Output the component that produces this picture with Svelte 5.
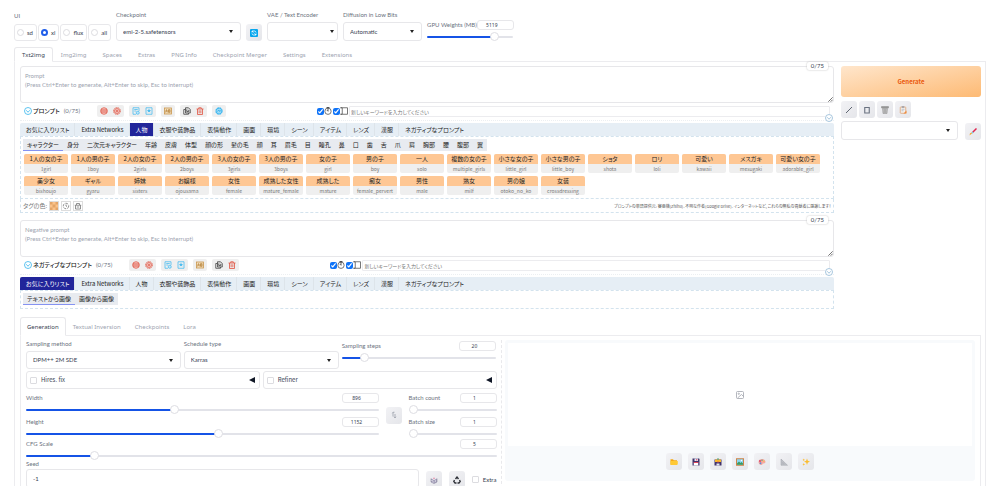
<script>
	let ui = $state('xl');
	let gpu = $state(5119);
	let steps = $state(20);
	let width = $state(896);
	let height = $state(1152);
	let batchCount = $state(1);
	let batchSize = $state(1);
	let cfg = $state(5);
	let seed = $state('-1');

	const uiModes = ['sd', 'xl', 'flux', 'all'];
	const mainTabs = ['Txt2img', 'Img2img', 'Spaces', 'Extras', 'PNG Info', 'Checkpoint Merger', 'Settings', 'Extensions'];
	const genTabs = ['Generation', 'Textual Inversion', 'Checkpoints', 'Lora'];
	const categories = [
		'お気に入りリスト', 'Extra Networks', '人物', '衣服や装飾品', '表情動作', '画面',
		'環境', 'シーン', 'アイテム', 'レンズ', '漢服', 'ネガティブなプロンプト'
	];
	const personGroups = [
		'キャラクター', '身分', '二次元キャラクター', '年齢', '皮膚', '体型', '顔の形', '髪の毛',
		'顔', '耳', '眉毛', '目', '瞳孔', '鼻', '口', '歯', '舌', '爪', '肩', '胸部', '腰', '腹部', '翼'
	];
	const favoriteGroups = ['テキストから画像', '画像から画像'];
	const tags = [
		['1人の女の子', '1girl'],
		['1人の男の子', '1boy'],
		['2人の女の子', '2girls'],
		['2人の男の子', '2boys'],
		['3人の女の子', '3girls'],
		['3人の男の子', '3boys'],
		['女の子', 'girl'],
		['男の子', 'boy'],
		['一人', 'solo'],
		['複数の女の子', 'multiple_girls'],
		['小さな女の子', 'little_girl'],
		['小さな男の子', 'little_boy'],
		['ショタ', 'shota'],
		['ロリ', 'loli'],
		['可愛い', 'kawaii'],
		['メスガキ', 'mesugaki'],
		['可愛い女の子', 'adorable_girl'],
		['美少女', 'bishoujo'],
		['ギャル', 'gyaru'],
		['姉妹', 'sisters'],
		['お嬢様', 'ojousama'],
		['女性', 'female'],
		['成熟した女性', 'mature_female'],
		['成熟した', 'mature'],
		['痴女', 'female_pervert'],
		['男性', 'male'],
		['熟女', 'milf'],
		['男の娘', 'otoko_no_ko'],
		['女装', 'crossdressing']
	];
	const outputTools = ['folder', 'save', 'zip', 'picture', 'palette', 'ruler', 'sparkles'];
	const toolGroups = [
		['globe', 'gear'],
		['history', 'star'],
		['ab'],
		['copy', 'trash']
	];

	const fill = (value, min, max) => `${((value - min) / (max - min)) * 100}%`;
</script>

{#snippet icon(name)}
	<svg class="icon" viewBox="0 0 16 16" fill="none" stroke="currentColor" stroke-width="1.6" aria-hidden="true">
		{#if name === 'refresh'}
			<rect x="0" y="0" width="16" height="16" rx="2" fill="#08a7ee" stroke="none" />
			<path d="M4 7V4h5a3.5 3.5 0 0 1 3 3M12 9v3H7a3.5 3.5 0 0 1-3-3M4 4l3 3M12 12 9 9" stroke="#fff" />
		{:else if name === 'chevron'}
			<circle cx="8" cy="8" r="7" />
			<path d="m4.5 6.5 3.5 4 3.5-4" />
		{:else if name === 'globe'}
			<circle cx="8" cy="8" r="6.6" fill="#f7c4bd" stroke="#e0604f" />
			<path d="M1.5 6h13M1.5 10h13" stroke="#d9503f" />
		{:else if name === 'gear'}
			<circle cx="8" cy="8" r="6.8" stroke="#e0604f" stroke-width="1.8" stroke-dasharray="3 1.2" />
			<circle cx="8" cy="8" r="5" fill="#f9d3ce" stroke="#e0604f" />
			<circle cx="8" cy="8" r="1.8" stroke="#d9503f" />
		{:else if name === 'history'}
			<path d="M14 8V1.5H2v13h6M4.5 5h7M4.5 8h4" stroke="#4bbcf0" />
			<circle cx="11.5" cy="11.5" r="3" fill="#bfe7fb" stroke="#4bbcf0" />
		{:else if name === 'star'}
			<path d="M2 1.5h12v13H2z" stroke="#4bbcf0" />
			<path d="m8 3 1.3 3 3 .2-2.3 2 .7 3L8 9.6 5.3 11.2l.7-3-2.3-2 3-.2z" fill="#4bbcf0" stroke="none" />
		{:else if name === 'ab'}
			<rect x="1" y="2" width="14" height="12" fill="#f3dfbf" stroke="#c9964e" />
			<path d="m3 11 2-6 1.5 6M9 5h3l1 1.5L9 8l4 1.5L12 11H9zM3 8h10" stroke="#b58238" stroke-width="1.2" />
		{:else if name === 'copy'}
			<path d="M5 1.5h6L14.5 5v7H5z" fill="#ddd" stroke="#444" />
			<path d="M5 5H1.5v9.5H11V12M7.5 5v4h4V6" stroke="#444" />
		{:else if name === 'trash'}
			<path d="M1 4h14M5.5 4V1.5h5V4M3 4v11h10V4M6.3 6.5v6M9.7 6.5v6" stroke="#e0523f" />
		{:else if name === 'ai'}
			<circle cx="8" cy="8" r="6" fill="#9adaf6" stroke="#42b8ef" stroke-width="2.6" stroke-dasharray="4 .7" />
			<path d="M5 9 7.5 6l2 3L11 6.5" stroke="#2ca9e8" />
		{:else if name === 'clock'}
			<circle cx="8" cy="8.5" r="6.3" stroke="#555" />
			<path d="M8 1v7.5M5 1h6M8 8.5l-2-2" stroke="#333" />
		{:else if name === 'panel'}
			<path d="M1 1.5h14v13H1M4.5 1.5v13M1 1.5h3M1 14.5h3" stroke="#555" />
		{:else if name === 'swatch'}
			<rect x="0" y="0" width="16" height="16" fill="#fbc28a" stroke="none" />
			<path d="M0 0h5v5H0zM11 0h5v5h-5zM5 5h6v6H5zM0 11h5v5H0zM11 11h5v5h-5z" fill="#e3a568" stroke="none" />
		{:else if name === 'reset'}
			<circle cx="8" cy="8" r="5.5" stroke="#777" stroke-dasharray="6 2" />
			<path d="M8 5v3l2 1" stroke="#777" />
		{:else if name === 'basket'}
			<path d="M1.5 6.5h13M3 6.5V14h10V6.5M5 6V3h6v3M5.5 10h5" stroke="#777" />
		{:else if name === 'resize'}
			<path d="M1 15 15 1M8.5 15 15 8.5" stroke="#444" stroke-width="2.4" />
		{:else if name === 'slash'}
			<path d="M2 14 14 2" stroke="#5d6470" stroke-width="2" />
		{:else if name === 'square'}
			<path d="M3.5 3h9v11h-9z" stroke="#6a7280" stroke-width="2.2" />
		{:else if name === 'bin'}
			<path d="M1 1h14v3H1z" fill="#999" stroke="#888" stroke-width="1" />
			<path d="M3 5h10l-1 10H4z" fill="#c2c2c2" stroke="#8b8b8b" stroke-width="1" />
			<path d="M6.5 6v8M9.5 6v8" stroke="#8b8b8b" stroke-width="1" />
		{:else if name === 'clipboard'}
			<rect x="2.5" y="2" width="11" height="12.5" rx="1" fill="#f4f1ee" stroke="#dda273" stroke-width="1.6" />
			<path d="M5.5 2h5" stroke="#8b94a3" stroke-width="2.6" />
			<path d="M5 6.5h6M5 9.5h4" stroke="#9ba6b5" stroke-width="1.2" />
			<path d="M9 15l6-6v6z" fill="#ef8b3c" stroke="none" />
		{:else if name === 'brush'}
			<path d="m15 1-8 8" stroke="#e0244f" stroke-width="3" />
			<path d="m8 8-2.5 2.5" stroke="#73d0e5" stroke-width="3" />
			<path d="M6.5 10.5 1 15l1-4.5L5 9z" fill="#f2a73b" stroke="none" />
		{:else if name === 'swap'}
			<path d="M6 11V3M4.5 4.5 6 2.5h3M10 6v7M8 11.5l2 2.5 2-2.5" stroke="#9197a2" stroke-width="1.4" />
		{:else if name === 'dice'}
			<path d="m2 5 6 3 6-3v7l-6 3-6-3z" fill="#aaa5bf" stroke="#77718f" stroke-width="1" />
			<path d="m2 5 6-3 6 3-6 3z" fill="#eceaf2" stroke="none" />
			<path d="M8 3.5v2" stroke="#dd3b61" stroke-width="2" />
			<path d="M4 8v2M6 11v2M11 9v2" stroke="#fff" />
		{:else if name === 'recycle'}
			<path d="m5 6 3-4 3 4M3 8l-1.5 3L4 14h3M13 8l1.5 3-2.5 3H9" stroke="#2c2f36" stroke-width="2.6" />
		{:else if name === 'image'}
			<rect x="1" y="1" width="14" height="14" rx="2" stroke="#a1a5ad" />
			<circle cx="5.5" cy="5.5" r="1.3" stroke="#a1a5ad" />
			<path d="m3 14 8-7 4 4" stroke="#a1a5ad" />
		{:else if name === 'folder'}
			<path d="M1 2.5h5L7.5 4.5H14V13H1z" fill="#f5a914" stroke="none" />
			<path d="M1 6h14.5v6.5L14 14H1z" fill="#ffc935" stroke="none" />
		{:else if name === 'save'}
			<path d="M1 1h13l1 1v13H1z" fill="#40336b" stroke="none" />
			<path d="M5 1h7v5H5z" fill="#dfe4f2" stroke="none" />
			<path d="M3.5 9h9v6h-9z" fill="#fff" stroke="none" />
			<path d="M3.5 9h9M9.5 2v3" stroke="#e4465a" stroke-width="2" />
		{:else if name === 'zip'}
			<path d="M1 3h14v12H1z" fill="#40336b" stroke="none" />
			<path d="M2 3h12v5H2z" fill="#f8b72b" stroke="none" />
			<path d="M5 11h6v4H5z" fill="#e3e6f1" stroke="none" />
			<path d="M6 2h4" stroke="#4ca676" stroke-width="2" />
			<path d="M6 8h4" stroke="#e55353" />
		{:else if name === 'picture'}
			<rect x="1" y="1.5" width="14" height="13" fill="#8bd6f4" stroke="#cf8446" stroke-width="2" />
			<path d="m2 11 4-4 3 3 2-2 3 3v2.5H2z" fill="#3a9b62" stroke="none" />
			<circle cx="11" cy="5" r="1.5" fill="#fff" stroke="none" />
		{:else if name === 'palette'}
			<path d="M8 2c5 0 7 3 7 6s-3 3-5 3 0 3-3 3-6-2-6-6 3-6 7-6z" fill="#f5a6a0" stroke="none" />
			<circle cx="4" cy="6" r="1.8" fill="#db3e63" stroke="none" />
			<circle cx="8" cy="4.5" r="1.5" fill="#5caf7c" stroke="none" />
			<circle cx="5" cy="10.5" r="1.8" fill="#5e8ad0" stroke="none" />
			<circle cx="11.5" cy="6.5" r="1.6" fill="#f3c651" stroke="none" />
		{:else if name === 'ruler'}
			<path d="M2 2v12.5h13zM5 9v2.5h3.5z" fill="#bfc1c7" fill-rule="evenodd" stroke="#9ea1a8" stroke-width="1" />
		{:else if name === 'sparkles'}
			<path d="m10 1 1.6 4.4L16 7.5l-4.4 1.6L10 14l-1.6-4.9L4 7.5l4.4-2.1zM3.5 1l.8 2 2 .8-2 .8-.8 2-.8-2-2-.8 2-.8zM3.5 10l.8 2 2 .8-2 .8-.8 2-.8-2-2-.8 2-.8z" fill="#fbbc2c" stroke="none" />
		{/if}
	</svg>
{/snippet}

{#snippet promptBlock(id, title, placeholder, active, negative)}
	<section class="prompt">
		<div class="prompt-box">
			<textarea {id} aria-label={title} {placeholder}></textarea>
			<span class="counter">0/75</span>
			<span class="grip">{@render icon('resize')}</span>
		</div>
		<div class="toolbar">
			<button class="fold" aria-label="toggle {id}">{@render icon('chevron')}</button>
			<h2>{title}</h2>
			<span class="count">(0/75)</span>
			<div class="tool-groups">
				{#each toolGroups as group}
					<div class="tool-group">
						{#each group as name}
							<button aria-label={name}>{@render icon(name)}</button>
						{/each}
					</div>
				{/each}
				{#if !negative}
					<div class="tool-group">
						<button aria-label="ai">{@render icon('ai')}</button>
					</div>
				{/if}
			</div>
			<label class="toggle"><input type="checkbox" checked aria-label="auto translate" />{@render icon('clock')}</label>
			<label class="toggle"><input type="checkbox" checked aria-label="side panel" />{@render icon('panel')}</label>
			<input class="keyword" type="text" aria-label="keyword" placeholder="新しいキーワードを入力してください" />
			<button class="expand" aria-label="expand {id}">{@render icon('chevron')}</button>
		</div>
		<div class="categories">
			{#each categories as name}
				<button class:active={name === active}>{name}</button>
			{/each}
		</div>
		<div class="groups">
			<div class="group-tabs">
				{#each negative ? favoriteGroups : personGroups as name, i}
					<button class:active={i === 0}>{name}</button>
				{/each}
			</div>
			{#if !negative}
				<div class="tags">
					{#each tags as [label, key]}
						<button class="tag"><span>{label}</span><small>{key}</small></button>
					{/each}
				</div>
			{/if}
		</div>
		{#if !negative}
			<div class="tag-footer">
				<span>タグの色:</span>
				<button aria-label="tag color">{@render icon('swatch')}</button>
				<button aria-label="reset color">{@render icon('reset')}</button>
				<button aria-label="clear color">{@render icon('basket')}</button>
				<p>プロンプトの単語提供元: 賽亜機(Zhihu)、不明な作者(Google Drive)、インターネットなど, これらの無私の貢献者に感謝します！</p>
			</div>
		{/if}
	</section>
{/snippet}

<main>
	<header>
		<fieldset class="field">
			<legend>UI</legend>
			<div class="modes">
				{#each uiModes as mode}
					<label><input type="radio" name="ui" value={mode} bind:group={ui} />{mode}</label>
				{/each}
			</div>
		</fieldset>
		<div class="field checkpoint">
			<label for="checkpoint">Checkpoint</label>
			<select id="checkpoint"><option>emi-2-5.safetensors</option></select>
		</div>
		<button class="square" aria-label="refresh">{@render icon('refresh')}</button>
		<div class="field vae">
			<label for="vae">VAE / Text Encoder</label>
			<select id="vae" class="tight"><option></option></select>
		</div>
		<div class="field low-bits">
			<label for="bits">Diffusion in Low Bits</label>
			<select id="bits"><option>Automatic</option></select>
		</div>
		<div class="slider gpu">
			<div class="slider-head">
				<label for="gpu">GPU Weights (MB)</label>
				<input type="text" class="number" aria-label="GPU weights value" bind:value={gpu} />
			</div>
			<input id="gpu" type="range" min="0" max="6243" bind:value={gpu} style:--fill={fill(gpu, 0, 6243)} />
		</div>
	</header>

	<nav class="tabs">
		{#each mainTabs as tab, i}
			<button class:active={i === 0}>{tab}</button>
		{/each}
	</nav>

	<div class="panel">
		<div class="top">
			<div class="prompts">
				{@render promptBlock('prompt', 'プロンプト', 'Prompt\n(Press Ctrl+Enter to generate, Alt+Enter to skip, Esc to interrupt)', '人物', false)}
				{@render promptBlock('negative', 'ネガティブなプロンプト', 'Negative prompt\n(Press Ctrl+Enter to generate, Alt+Enter to skip, Esc to interrupt)', 'お気に入りリスト', true)}
			</div>
			<aside>
				<button class="generate">Generate</button>
				<div class="actions">
					{#each ['slash', 'square', 'bin', 'clipboard'] as name}
						<button class="square" aria-label={name}>{@render icon(name)}</button>
					{/each}
				</div>
				<div class="styles">
					<select aria-label="styles"><option></option></select>
					<button class="square" aria-label="edit styles">{@render icon('brush')}</button>
				</div>
			</aside>
		</div>

		<nav class="tabs gen-tabs">
			{#each genTabs as tab, i}
				<button class:active={i === 0}>{tab}</button>
			{/each}
		</nav>
		<div class="generation">
			<div class="settings">
				<div class="sampling">
					<div class="field">
						<label for="sampler">Sampling method</label>
						<select id="sampler"><option>DPM++ 2M SDE</option></select>
					</div>
					<div class="field">
						<label for="schedule">Schedule type</label>
						<select id="schedule"><option>Karras</option></select>
					</div>
					<div class="slider">
						<div class="slider-head">
							<label for="steps">Sampling steps</label>
							<input type="text" class="number" aria-label="Sampling steps value" bind:value={steps} />
						</div>
						<input id="steps" type="range" min="1" max="150" bind:value={steps} style:--fill={fill(steps, 1, 150)} />
					</div>
				</div>
				<div class="accordions">
					{#each ['Hires. fix', 'Refiner'] as name}
						<div class="accordion">
							<label><input type="checkbox" class="check" />{name}</label>
							<button aria-label="open {name}"><svg viewBox="0 0 6 6"><path d="M6 0v6L0 3z" fill="#111827" /></svg></button>
						</div>
					{/each}
				</div>
				<div class="dimensions">
					<div class="stack">
						<div class="slider">
							<div class="slider-head">
								<label for="width">Width</label>
								<input type="text" class="number" aria-label="Width value" bind:value={width} />
							</div>
							<input id="width" type="range" min="64" max="2048" step="8" bind:value={width} style:--fill={fill(width, 64, 2048)} />
						</div>
						<div class="slider">
							<div class="slider-head">
								<label for="height">Height</label>
								<input type="text" class="number" aria-label="Height value" bind:value={height} />
							</div>
							<input id="height" type="range" min="64" max="2048" step="8" bind:value={height} style:--fill={fill(height, 64, 2048)} />
						</div>
					</div>
					<button class="square" aria-label="swap">{@render icon('swap')}</button>
					<div class="stack batch">
						<div class="slider">
							<div class="slider-head">
								<label for="count">Batch count</label>
								<input type="text" class="number" aria-label="Batch count value" bind:value={batchCount} />
							</div>
							<input id="count" type="range" min="1" max="100" bind:value={batchCount} style:--fill={fill(batchCount, 1, 100)} />
						</div>
						<div class="slider">
							<div class="slider-head">
								<label for="size">Batch size</label>
								<input type="text" class="number" aria-label="Batch size value" bind:value={batchSize} />
							</div>
							<input id="size" type="range" min="1" max="8" bind:value={batchSize} style:--fill={fill(batchSize, 1, 8)} />
						</div>
					</div>
				</div>
				<div class="slider">
					<div class="slider-head">
						<label for="cfg">CFG Scale</label>
						<input type="text" class="number" aria-label="CFG value" bind:value={cfg} />
					</div>
					<input id="cfg" type="range" min="1" max="30" step="0.5" bind:value={cfg} style:--fill={fill(cfg, 1, 30)} />
				</div>
				<div class="seed">
					<div class="field">
						<label for="seed">Seed</label>
						<input id="seed" type="text" bind:value={seed} />
					</div>
					<button class="square" aria-label="random seed">{@render icon('dice')}</button>
					<button class="square" aria-label="reuse seed">{@render icon('recycle')}</button>
					<label class="extra"><input type="checkbox" class="check" />Extra</label>
				</div>
			</div>
			<div class="output">
				<div class="gallery">
					<div class="canvas">{@render icon('image')}</div>
					<div class="output-tools">
						{#each outputTools as name}
							<button class="square" aria-label={name}>{@render icon(name)}</button>
						{/each}
					</div>
				</div>
			</div>
		</div>
	</div>
</main>

<style>
	:global(body) {
		margin: 0;
		background: #fff;
		overflow: hidden;
	}

	main {
		padding: 11px 14px 0;
		font-family: 'Noto Sans CJK JP', sans-serif;
		font-size: 6px;
		line-height: 8px;
		font-feature-settings: 'palt';
		color: #374151;
	}

	main * {
		box-sizing: border-box;
	}

	button,
	input,
	select,
	textarea {
		margin: 0;
		padding: 0;
		border: 0;
		background: none;
		font: inherit;
		font-feature-settings: inherit;
		color: inherit;
	}

	button {
		cursor: pointer;
	}

	.field,
	.slider,
	.prompt-box,
	.count,
	.extra {
		font-family: Lato, 'Noto Sans CJK JP', sans-serif;
	}

	.tabs,
	.number {
		font-family: 'Noto Sans', sans-serif;
	}

	.icon {
		display: block;
		width: 8px;
		height: 8px;
	}

	header {
		display: flex;
		align-items: flex-end;
		gap: 5px;
		height: 30px;
	}

	.field {
		display: flex;
		flex-direction: column;
		gap: 3px;
		min-width: 0;
		margin: 0;
		padding: 0;
		border: 0;
	}

	.field > label,
	legend,
	.slider label {
		padding: 0;
		color: #6b7280;
		white-space: nowrap;
	}

	.modes {
		display: flex;
		gap: 1px;
		margin-top: 4px;
	}

	.modes label {
		display: flex;
		align-items: center;
		gap: 3px;
		height: 17px;
		padding: 0 3px 0 2px;
		border: 1px solid #e8e8eb;
		border-radius: 3px;
	}

	.modes input {
		appearance: none;
		width: 7px;
		height: 7px;
		border: 1px solid #dcdce0;
		border-radius: 50%;
	}

	.modes input:checked {
		border: 2px solid #1f5eea;
	}

	select,
	.seed .field input {
		width: 100%;
		height: 19px;
		padding: 0 6px;
		border: 1px solid #e7e7ea;
		border-radius: 3px;
	}

	select {
		appearance: none;
		background: url("data:image/svg+xml,%3Csvg xmlns='http://www.w3.org/2000/svg' viewBox='0 0 4 3'%3E%3Cpath d='M0 0h4L2 3z' fill='%23222'/%3E%3C/svg%3E") right 7px center / 4px 3px no-repeat;
	}

	select.tight {
		background-position: right 3px center;
	}

	.checkpoint {
		width: 125px;
	}

	.vae {
		width: 71px;
	}

	.low-bits {
		width: 79px;
	}

	.gpu {
		width: 86px;
	}

	.square {
		display: flex;
		flex: none;
		align-items: center;
		justify-content: center;
		width: 16px;
		height: 17px;
		border-radius: 3px;
		background: linear-gradient(135deg, #f2f2f5, #e5e6ea);
	}

	.slider-head {
		display: flex;
		justify-content: space-between;
		align-items: center;
		height: 11px;
	}

	.number {
		width: 37px;
		height: 10px;
		padding-right: 7px;
		border: 1px solid #e7e7ea;
		border-radius: 3px;
		font-size: 5px;
		text-align: center;
	}

	input[type='range'] {
		appearance: none;
		display: block;
		width: 100%;
		height: 8px;
		margin-top: 3px;
	}

	input[type='range']::-webkit-slider-runnable-track {
		height: 2px;
		border-radius: 1px;
		background: linear-gradient(to right, #1553e6 var(--fill), #e2e3e9 var(--fill));
	}

	input[type='range']::-webkit-slider-thumb {
		appearance: none;
		width: 9px;
		height: 9px;
		margin-top: -4px;
		border: 1px solid #dedee3;
		border-radius: 50%;
		background: #fff;
	}

	.tabs {
		display: flex;
		margin-top: 6px;
	}

	.tabs button {
		height: 15px;
		padding: 0 7px;
		margin-bottom: -1px;
		border: 1px solid transparent;
		border-radius: 3px 3px 0 0;
		color: #9ca3af;
	}

	.tabs button.active {
		border-color: #e8e8eb;
		border-bottom-color: #fff;
		background: #fff;
		color: #374151;
	}

	.panel {
		padding: 4px 4px 0 5px;
		border: 1px solid #ececef;
		border-bottom: 0;
	}

	.top {
		display: flex;
		gap: 7px;
	}

	.prompts {
		flex: 1;
		min-width: 0;
	}

	.prompt + .prompt {
		margin-top: 7px;
	}

	.prompt-box,
	.toolbar {
		position: relative;
	}

	textarea {
		display: block;
		width: 100%;
		height: 37px;
		padding: 4px;
		border: 1px solid #e7e7ea;
		border-radius: 3px;
		resize: none;
		line-height: 9px;
	}

	textarea::placeholder {
		color: #9ca3af;
	}

	.counter {
		position: absolute;
		top: -4px;
		right: 6px;
		padding: 0 4px;
		border-radius: 2px;
		background: #fff;
		box-shadow: 0 0 2px #bbb;
	}

	.grip {
		position: absolute;
		right: 1px;
		bottom: 1px;
	}

	.grip .icon {
		width: 5px;
		height: 5px;
	}

	.toolbar {
		display: flex;
		align-items: center;
		height: 18px;
		padding: 0 4px 1px;
		border-bottom: 1px dotted #eceff2;
	}

	.fold {
		margin-right: 1px;
		color: #36b5ee;
	}

	h2 {
		margin: 0 4px 0 0;
		font-size: 6px;
		font-weight: 500;
		color: #222;
	}

	.count {
		color: #6b7280;
	}

	.tool-groups {
		display: flex;
		gap: 5px;
		margin: 0 91px 0 17px;
	}

	.tool-group {
		display: flex;
		align-items: center;
		gap: 5px;
		height: 12px;
		padding: 0 3px;
		border-radius: 2px;
		background: #efefef;
	}

	.toggle {
		display: flex;
		align-items: center;
		margin-right: 1px;
	}

	.toggle input {
		width: 7px;
		height: 7px;
		accent-color: #0f73f7;
	}

	.keyword {
		flex: 1;
		height: 11px;
		padding-left: 1px;
		border: 1px solid #ececef;
		border-radius: 1px;
		font-size: 5px;
	}

	.expand {
		position: absolute;
		right: 1px;
		bottom: -2px;
		border-radius: 50%;
		background: #fff;
		color: #92b9d6;
	}

	.categories {
		display: flex;
		height: 13px;
		margin-top: 2px;
		border-radius: 2px 2px 0 0;
		background: #e6eef5;
		overflow: hidden;
	}

	.categories button {
		padding: 0 5px 0 6px;
		border-right: 1px solid #dde4ea;
		color: #222;
	}

	.categories button:last-child {
		border-right: 0;
	}

	.categories button.active {
		background: #21259a;
		color: #fff;
	}

	.groups {
		padding: 2px 2px 3px;
		border: 1px dashed #d3e3ee;
	}

	.group-tabs {
		display: inline-flex;
		height: 12px;
		vertical-align: top;
		background: #e8ebf0;
	}

	.group-tabs button {
		padding: 0 4px;
		border-bottom: 1px solid transparent;
		color: #222;
	}

	.group-tabs button.active {
		border-bottom-color: #8593f2;
	}

	.tags {
		display: flex;
		flex-wrap: wrap;
		gap: 3px;
		padding: 3px 1px 0;
	}

	.tag {
		width: 44px;
		height: 19px;
		border-radius: 2px;
		background: #efefef;
		overflow: hidden;
	}

	.tag span,
	.tag small {
		display: block;
		height: 10px;
		line-height: 9px;
	}

	.tag span {
		background: #fec794;
		color: #222;
	}

	.tag small {
		font-size: 5px;
		color: #777;
	}

	.tag-footer {
		display: flex;
		align-items: center;
		gap: 2px;
		height: 14px;
		padding: 0 2px;
		border: 1px dashed #d3e3ee;
		border-top: 0;
		color: #777;
	}

	.tag-footer button {
		border: 1px solid #ddd;
	}

	.tag-footer p {
		margin: 0 0 0 auto;
		font-size: 4px;
		color: #555;
	}

	aside {
		width: 140px;
	}

	.generate {
		display: block;
		width: 100%;
		height: 31px;
		border-radius: 3px;
		background: linear-gradient(to bottom right, #ffe6cc, #fdba74);
		font-weight: 700;
		color: #ea580c;
	}

	.actions {
		display: flex;
		gap: 2px;
		margin-top: 4px;
	}

	.styles {
		display: flex;
		align-items: flex-end;
		gap: 7px;
		margin-top: 3px;
	}

	.gen-tabs {
		margin-top: 8px;
	}

	.gen-tabs button {
		height: 19px;
		padding: 0 6px;
	}

	.generation {
		display: grid;
		grid-template-columns: minmax(0, 1fr) minmax(0, 1fr);
		height: 160px;
		padding: 4px 5px 0;
		border: 1px solid #ececef;
	}

	.settings {
		padding-right: 4px;
	}

	.sampling {
		display: grid;
		grid-template-columns: repeat(3, 1fr);
		gap: 3px;
	}

	.sampling select {
		height: 18px;
	}

	.accordions {
		display: grid;
		grid-template-columns: 1fr 1fr;
		gap: 3px;
		margin-top: 2px;
	}

	.accordion {
		display: flex;
		align-items: center;
		justify-content: space-between;
		height: 18px;
		padding: 0 4px 0 3px;
		border: 1px solid #e7e7ea;
		border-radius: 3px;
	}

	.accordion label,
	.extra {
		display: flex;
		align-items: center;
		gap: 4px;
	}

	.accordion svg {
		display: block;
		width: 6px;
		height: 6px;
	}

	.check {
		appearance: none;
		width: 7px;
		height: 7px;
		border: 1px solid #dcdce0;
		border-radius: 1px;
	}

	.dimensions {
		display: flex;
		align-items: center;
		gap: 7px;
		margin-top: 3px;
	}

	.stack {
		display: flex;
		flex: 1;
		flex-direction: column;
		gap: 2px;
	}

	.stack.batch {
		flex: none;
		width: 88px;
	}

	.seed {
		display: flex;
		align-items: flex-end;
		gap: 7px;
	}

	.seed .field {
		flex: 1;
		gap: 1px;
	}

	.extra {
		height: 17px;
	}

	.output {
		padding-left: 3px;
		border-left: 1px dashed #e9e9ec;
	}

	.gallery {
		padding: 3px 3px 0;
		border-radius: 3px;
		background: #f8fafc;
	}

	.canvas {
		display: flex;
		align-items: center;
		justify-content: center;
		height: 103px;
		background: #fff;
	}

	.output-tools {
		display: flex;
		align-items: center;
		justify-content: center;
		gap: 6px;
		height: 35px;
		padding-bottom: 4px;
	}
</style>
